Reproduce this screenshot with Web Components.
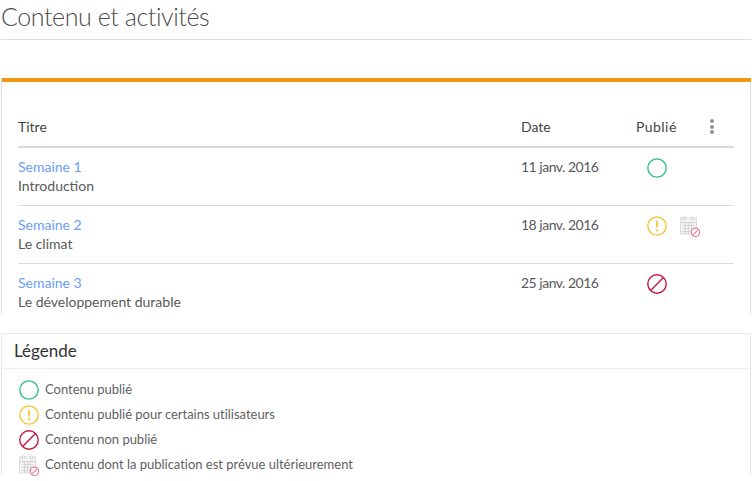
<!DOCTYPE html>
<html lang="fr">
<head>
<meta charset="utf-8">
<title>Contenu et activités</title>
<style>
  html, body { margin: 0; height: 481px; overflow: hidden; background: #fff; }
  body { font-family: Lato, "Open Sans", sans-serif; font-size: 14px; color: #5a5a5a; }
</style>
</head>
<body>
<page-title>Contenu et activités</page-title>
<content-panel>
  <content-row week="Semaine 1" label="Introduction" date="11 janv. 2016" status="published"></content-row>
  <content-row week="Semaine 2" label="Le climat" date="18 janv. 2016" status="partial" scheduled></content-row>
  <content-row week="Semaine 3" label="Le développement durable" date="25 janv. 2016" status="unpublished" last></content-row>
</content-panel>
<legend-box>
  <legend-item status="published">Contenu publié</legend-item>
  <legend-item status="partial">Contenu publié pour certains utilisateurs</legend-item>
  <legend-item status="unpublished">Contenu non publié</legend-item>
  <legend-item status="scheduled">Contenu dont la publication est prévue ultérieurement</legend-item>
</legend-box>

<script>
class StatusIcon extends HTMLElement {
  connectedCallback() {
    const icons = {
      published: `<circle cx="10" cy="10" r="9.2" fill="none" stroke="#2ebd7c" stroke-width="1.3"/>`,
      partial: `<circle cx="10" cy="10" r="9.2" fill="none" stroke="#fbc02d" stroke-width="1.3"/>
        <path d="M10 5v6.6" stroke="#fbc02d" stroke-width="1.7" fill="none"/>
        <circle cx="10" cy="14.3" r="1.1" fill="#fbc02d"/>`,
      unpublished: `<circle cx="10" cy="10" r="9.2" fill="none" stroke="#c8193f" stroke-width="1.4"/>
        <path d="M3.6 16.4L16.4 3.6" stroke="#c8193f" stroke-width="1.4" fill="none"/>`,
      scheduled: `<rect x=".5" y="2" width="16" height="16" fill="#f2f2f2" stroke="#dcdcdc"/>
        <path d="M.5 6.5h16M3 9.5h11M3 12.5h11M3 15.5h11M5.5 6.5v11M8.5 6.5v11M11.5 6.5v11" stroke="#cdcdcd" stroke-width=".7" fill="none"/>
        <circle cx="4.5" cy="2.2" r="1.4" fill="#fff" stroke="#c0c0c0" stroke-width=".8"/>
        <circle cx="12.5" cy="2.2" r="1.4" fill="#fff" stroke="#c0c0c0" stroke-width=".8"/>
        <circle cx="15.5" cy="16.3" r="4.2" fill="#fff" stroke="#e57a92" stroke-width="1.1"/>
        <path d="M12.5 19.3l6-6" stroke="#e57a92" stroke-width="1.1" fill="none"/>`
    };
    const name = this.getAttribute("name");
    this.attachShadow({ mode: "open" }).innerHTML = `
      <style>:host { display: block; width: 20px; height: 20px; } svg { display: block; overflow: visible; }</style>
      <svg width="20" height="20" viewBox="0 0 20 20">${icons[name] || ""}</svg>`;
  }
}
customElements.define("status-icon", StatusIcon);

class PageTitle extends HTMLElement {
  constructor() {
    super();
    this.attachShadow({ mode: "open" }).innerHTML = `
      <style>
        :host { display: block; margin: 0 3px 0 1px; height: 40px; box-sizing: border-box; border-bottom: 1px solid #ddd; }
        h1 { margin: 0; padding: 0; font-size: 25px; letter-spacing: -.42px; line-height: 32px; font-weight: 300; color: #4d4d4d; }
      </style>
      <h1><slot></slot></h1>`;
  }
}
customElements.define("page-title", PageTitle);

class ContentPanel extends HTMLElement {
  constructor() {
    super();
    this.attachShadow({ mode: "open" }).innerHTML = `
      <style>
        :host { display: block; margin: 38px 3px 0 1px; height: 236px; box-sizing: border-box;
          border: solid #ddd; border-width: 0 1px; padding: 3px 16px 0; }
        .bar { height: 4px; background: #f39712; margin: -3px -17px 0 -16px; }
        .head { display: grid; grid-template-columns: 503px 115px 74px 4px; height: 66px; box-sizing: border-box;
          border-bottom: 2px solid #d9d9d9; padding-top: 35px; line-height: 20px; color: #444; }
        .pub { letter-spacing: .45px; }
        .more { display: flex; flex-direction: column; gap: 1.5px; padding-top: 2px; }
        .more i { width: 4px; height: 4px; border-radius: 50%; background: #8f8f8f; }
      </style>
      <div class="bar"></div>
      <div class="head">
        <span>Titre</span><span>Date</span><span class="pub">Publié</span>
        <div class="more"><i></i><i></i><i></i></div>
      </div>
      <slot></slot>`;
  }
}
customElements.define("content-panel", ContentPanel);

class ContentRow extends HTMLElement {
  connectedCallback() {
    const status = this.getAttribute("status");
    this.attachShadow({ mode: "open" }).innerHTML = `
      <style>
        :host { display: grid; grid-template-columns: 503px 126px 1fr; height: 58px; box-sizing: border-box;
          padding-top: 9px; border-bottom: 1px solid #ddd; line-height: 19px; }
        :host([last]) { border-bottom: 0; }
        a { color: #6b9cf7; text-decoration: none; display: block; }
        .date { letter-spacing: -.5px; }
        .icons { display: flex; gap: 13px; padding-top: 1px; }
      </style>
      <div><a href="#">${this.getAttribute("week")}</a>${this.getAttribute("label")}</div>
      <div class="date">${this.getAttribute("date")}</div>
      <div class="icons">
        <status-icon name="${status}"></status-icon>
        ${this.hasAttribute("scheduled") ? `<status-icon name="scheduled"></status-icon>` : ""}
      </div>`;
  }
}
customElements.define("content-row", ContentRow);

class LegendBox extends HTMLElement {
  constructor() {
    super();
    this.attachShadow({ mode: "open" }).innerHTML = `
      <style>
        :host { display: block; margin: 19px 3px 0 1px; border: 1px solid #e8e8e8; border-bottom: 0; }
        h2 { margin: 0; height: 35px; box-sizing: border-box; padding: 6px 12px 0; font-size: 17px; line-height: 22px;
          font-weight: 400; color: #333; border-bottom: 1px solid #eee; }
        .items { padding: 11px 17px 0; display: flex; flex-direction: column; gap: 5px; }
      </style>
      <h2>Légende</h2>
      <div class="items"><slot></slot></div>`;
  }
}
customElements.define("legend-box", LegendBox);

class LegendItem extends HTMLElement {
  connectedCallback() {
    this.attachShadow({ mode: "open" }).innerHTML = `
      <style>
        :host { display: flex; align-items: center; gap: 6px; height: 20px; font-size: 13px; color: #5f5f5f; }
        .text { padding-bottom: 2px; letter-spacing: -.02px; }
      </style>
      <status-icon name="${this.getAttribute("status")}"></status-icon>
      <span class="text"><slot></slot></span>`;
  }
}
customElements.define("legend-item", LegendItem);
</script>
</body>
</html>
